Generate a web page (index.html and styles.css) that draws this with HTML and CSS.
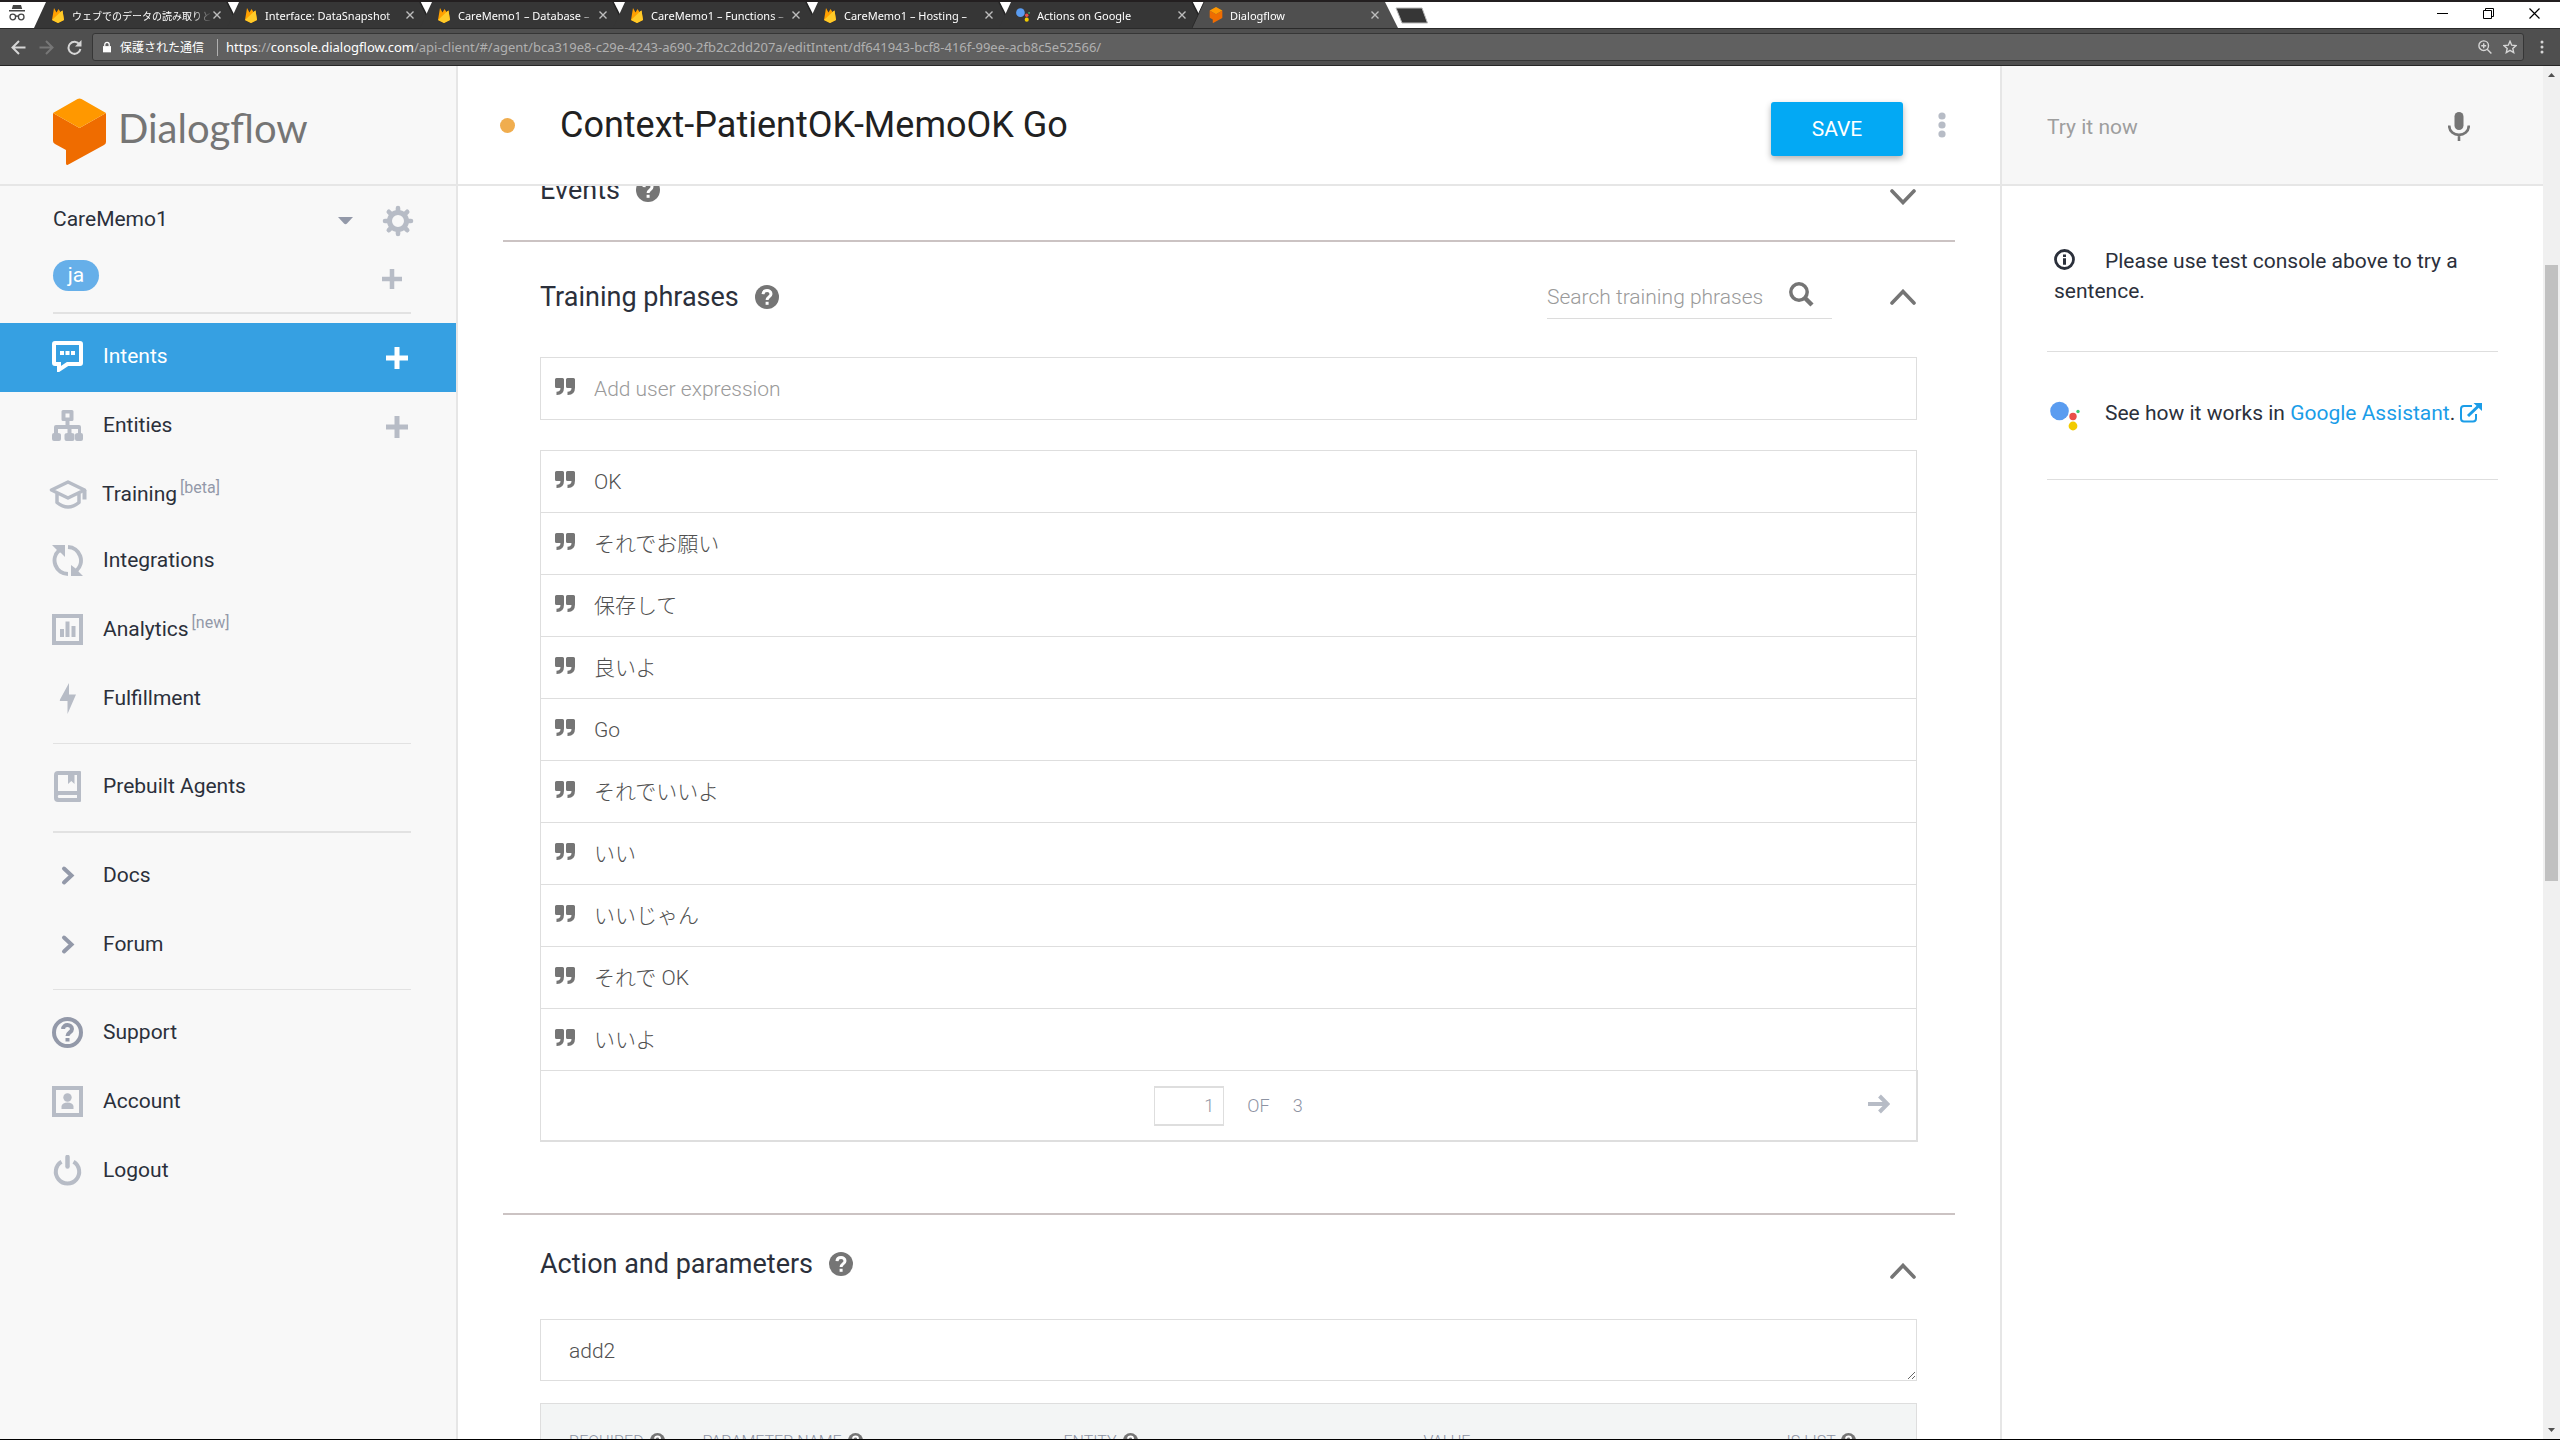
FILE: index.html
```html
<!DOCTYPE html>
<html lang="en">
<head>
<meta charset="utf-8">
<title>Dialogflow</title>
<link rel="stylesheet" href="styles.css">
</head>
<body>
<svg class="defs" aria-hidden="true">
  <symbol id="tab" viewBox="0 0 206 26"><path d="M0 26L12 0H193L206 26z" fill="#363636"/><path d="M193 0L206 26" stroke="#222" stroke-width="1.5"/></symbol>
  <symbol id="tab-active" viewBox="0 0 206 26"><path d="M0 26L12 0H193L206 26z" fill="#4f4f4f"/><path d="M12 0L0 26" stroke="#2a2a2a" stroke-width="1"/></symbol>
  <symbol id="firebase" viewBox="0 0 14 16"><path d="M1 13L3 1l2.500 4.500L7.500 2l2 3 2-1.500L13 13l-6 3z" fill="#ffa000"/><path d="M1 13L9.500 5l2-1.500L13 13l-6 3z" fill="#ffca28"/></symbol>
  <symbol id="assistant" viewBox="0 0 30 30"><circle cx="9.500" cy="10" r="9.300" fill="#5a9cf0"/><circle cx="23" cy="15.500" r="3.700" fill="#ea5048"/><circle cx="23" cy="25" r="4.400" fill="#f2cb00"/><circle cx="28" cy="10.500" r="1.700" fill="#3ecb74"/></symbol>
  <symbol id="cube" viewBox="0 0 53 67"><path d="M0 15L26.500 30 53 15V44q0 2-2 3L14.500 67q-1.500 0-1.500-1.500V52L2 46q-2-1-2-3z" fill="#ef6c00"/><path d="M0 15L24.500 1q2-1.200 4 0L53 15 26.500 30z" fill="#ff9800"/></symbol>
  <symbol id="x" viewBox="0 0 8 8"><path d="M.5 .5l7 7M7.500 .5l-7 7" stroke="#bdbdbd" stroke-width="1.400"/></symbol>
  <symbol id="plus" viewBox="0 0 22 22"><path d="M11 0v22M0 11h22" stroke="currentColor" stroke-width="5"/></symbol>
  <symbol id="help" viewBox="0 0 24 24"><circle cx="12" cy="12" r="12" fill="#757575"/><path d="M8 9.200C8.300 4.300 16 4.600 16 9c0 3-3.900 2.800-3.900 6" fill="none" stroke="#fff" stroke-width="3"/><path d="M10.600 16.800h3v3h-3z" fill="#fff"/></symbol>
  <symbol id="down" viewBox="0 0 26 16"><path d="M2 2l11 11.500L24 2" fill="none" stroke="#757575" stroke-width="3.600" stroke-linecap="round"/></symbol>
  <symbol id="up" viewBox="0 0 26 16"><path d="M2 14L13 2.500 24 14" fill="none" stroke="#757575" stroke-width="3.600" stroke-linecap="round"/></symbol>
  <symbol id="quote" viewBox="0 0 20 17"><path d="M1.500 0h6Q9 0 9 1.500v8Q9 17 2 17H1.500v-3.200Q5.500 13.800 5.500 10h-4Q0 10 0 8.500v-7Q0 0 1.500 0zM12.500 0h6Q20 0 20 1.500v8Q20 17 13 17h-.5v-3.200q4 0 4-3.800h-4Q11 10 11 8.500v-7Q11 0 12.500 0z" fill="#757575"/></symbol>
</svg>

<header class="browser">
  <div class="strip">
    <svg class="incognito" viewBox="0 0 16 16" fill="#454545"><path d="M4 0h8l1.200 4H2.800zM0 5h16v1.500H0z"/><g fill="none" stroke="#454545" stroke-width="1.300"><circle cx="3.800" cy="12" r="2.800"/><circle cx="12.200" cy="12" r="2.800"/><path d="M6.600 11.500q1.400-1 2.800 0"/></g></svg>
    <ul class="tabs">
      <li class="tab"><svg class="shape"><use href="#tab"/></svg><svg class="fav"><use href="#firebase"/></svg><span class="tab-title" lang="ja">ウェブでのデータの読み取りと</span><button class="close" aria-label="Close tab"><svg><use href="#x"/></svg></button></li>
      <li class="tab"><svg class="shape"><use href="#tab"/></svg><svg class="fav"><use href="#firebase"/></svg><span class="tab-title">Interface: DataSnapshot</span><button class="close" aria-label="Close tab"><svg><use href="#x"/></svg></button></li>
      <li class="tab"><svg class="shape"><use href="#tab"/></svg><svg class="fav"><use href="#firebase"/></svg><span class="tab-title">CareMemo1 – Database –</span><button class="close" aria-label="Close tab"><svg><use href="#x"/></svg></button></li>
      <li class="tab"><svg class="shape"><use href="#tab"/></svg><svg class="fav"><use href="#firebase"/></svg><span class="tab-title">CareMemo1 – Functions –</span><button class="close" aria-label="Close tab"><svg><use href="#x"/></svg></button></li>
      <li class="tab"><svg class="shape"><use href="#tab"/></svg><svg class="fav"><use href="#firebase"/></svg><span class="tab-title">CareMemo1 – Hosting –</span><button class="close" aria-label="Close tab"><svg><use href="#x"/></svg></button></li>
      <li class="tab"><svg class="shape"><use href="#tab"/></svg><svg class="fav"><use href="#assistant"/></svg><span class="tab-title">Actions on Google</span><button class="close" aria-label="Close tab"><svg><use href="#x"/></svg></button></li>
      <li class="tab active"><svg class="shape"><use href="#tab-active"/></svg><svg class="fav"><use href="#cube"/></svg><span class="tab-title">Dialogflow</span><button class="close" aria-label="Close tab"><svg><use href="#x"/></svg></button></li>
    </ul>
    <button class="newtab" aria-label="New tab"><svg viewBox="0 0 34 17"><path d="M1 1h26l5.500 15H7z" fill="#363636" stroke="#b8b8b8" stroke-width="1"/></svg></button>
    <div class="window-buttons">
      <button aria-label="Minimize"><svg viewBox="0 0 11 11"><path d="M0 5.500h11" stroke="#000"/></svg></button>
      <button aria-label="Restore"><svg viewBox="0 0 11 11" fill="none" stroke="#000"><path d="M.5 2.500h8v8h-8zM2.500 2.500v-2h8v8h-2"/></svg></button>
      <button aria-label="Close"><svg viewBox="0 0 11 11"><path d="M.5 .5l10 10M10.500 .5l-10 10" stroke="#000" stroke-width="1.200"/></svg></button>
    </div>
  </div>
  <div class="toolbar">
    <div class="nav-buttons">
      <button aria-label="Back"><svg viewBox="0 0 15 15" fill="none" stroke="#d6d6d6" stroke-width="2"><path d="M14.500 7.500H2M8 1L1.500 7.500 8 14"/></svg></button>
      <button aria-label="Forward"><svg viewBox="0 0 15 15" fill="none" stroke="#777" stroke-width="2"><path d="M.5 7.500H13M7 1l6.500 6.500L7 14"/></svg></button>
      <button aria-label="Reload"><svg viewBox="0 0 15 15"><path d="M12.500 4.500A6 6 0 1 0 13.400 9" fill="none" stroke="#d6d6d6" stroke-width="2"/><path d="M14.500 0v6.500H8z" fill="#d6d6d6"/></svg></button>
    </div>
    <div class="omnibox">
      <svg class="lock" viewBox="0 0 9 12"><path d="M0 5h9v7H0z" fill="#fff"/><path d="M2 5.500V3.300a2.500 2.500 0 0 1 5 0v2.200" fill="none" stroke="#fff" stroke-width="1.400"/></svg>
      <span class="secure" lang="ja">保護された通信</span>
      <span class="url"><span class="lit">https</span>://<span class="lit">console.dialogflow.com</span>/api-client/#/agent/bca319e8-c29e-4243-a690-2fb2c2dd207a/editIntent/df641943-bcf8-416f-99ee-acb8c5e52566/</span>
      <svg class="tool" viewBox="0 0 14 14" fill="none" stroke="#d6d6d6" stroke-width="1.400"><circle cx="5.700" cy="5.700" r="4.800"/><path d="M9.200 9.200l4.200 4.200M3.200 5.700h5M5.700 3.200v5"/></svg>
      <svg class="tool" viewBox="0 0 14 14" fill="none" stroke="#d6d6d6" stroke-width="1.400"><path d="M7 1.300l1.700 3.900 4.300.4-3.200 2.800.9 4.200L7 10.400l-3.700 2.200.9-4.200L1 5.600l4.300-.4z"/></svg>
    </div>
    <button class="menu" aria-label="Menu"><svg viewBox="0 0 4 14" fill="#d6d6d6"><circle cx="2" cy="2" r="1.500"/><circle cx="2" cy="7" r="1.500"/><circle cx="2" cy="12" r="1.500"/></svg></button>
  </div>
</header>

<div class="app">
  <aside class="sidebar">
    <a class="brand" href="#"><svg class="brand-icon"><use href="#cube"/></svg><span>Dialogflow</span></a>
    <div class="agent">
      <select class="agent-select" aria-label="Agent"><option>CareMemo1</option></select>
      <svg class="caret" viewBox="0 0 15 8"><path d="M0 0h15L9 6.500q-1.500 1.500-3 0z" fill="#9399a9"/></svg>
      <button class="gear" aria-label="Agent settings"><svg viewBox="0 0 32 32" fill="none" stroke="#b7bcc6"><circle cx="16" cy="16" r="8.500" stroke-width="5"/><path d="M16 3v4M16 25v4M3 16h4M25 16h4M6.800 6.800l2.800 2.800M22.400 22.400l2.800 2.800M6.800 25.200l2.800-2.800M22.400 9.600l2.800-2.800" stroke-width="4.600" stroke-linecap="round"/></svg></button>
    </div>
    <div class="language">
      <span class="pill">ja</span>
      <button class="add-language" aria-label="Add language"><svg viewBox="0 0 22 22"><use href="#plus"/></svg></button>
    </div>
    <hr class="rule thick">
    <nav>
      <div class="item active"><a href="#"><svg class="icon" viewBox="0 0 31 31"><path d="M3 2h25q1 0 1 1v19q0 1-1 1H15.500L7 28.700V23H3q-1 0-1-1V3q0-1 1-1z" fill="none" stroke="#fff" stroke-width="4"/><path d="M8 10h4v4H8zM13.500 10h4v4h-4zM19 10h4v4h-4z" fill="#fff"/></svg>Intents</a><button class="add" aria-label="Create intent"><svg><use href="#plus"/></svg></button></div>
      <div class="item"><a href="#"><svg class="icon" viewBox="0 0 31 31" fill="#b7bcc6"><path fill-rule="evenodd" d="M11 0h9q1.500 0 1.500 1.500v8q0 1.500-1.500 1.500h-2.500v4H27q2 0 2 2v6q2 0 2 2v4q0 2-2 2h-4q-2 0-2-2v-4q0-2 3-2v-4h-6.500v4q3 0 3 2v4q0 2-2 2h-6q-2 0-2-2v-4q0-2 3-2v-4H6v4q3 0 3 2v4q0 2-2 2H2q-2 0-2-2v-4q0-2 2-2v-6q0-2 2-2h9.500v-4H11q-1.500 0-1.500-1.500v-8Q9.500 0 11 0zm2.500 3.500v4h4v-4z"/></svg>Entities</a><button class="add" aria-label="Create entity"><svg><use href="#plus"/></svg></button></div>
      <div class="item short"><a href="#"><svg class="icon wide" viewBox="0 0 40 31" fill="none" stroke="#b7bcc6" stroke-width="3.500" stroke-linejoin="round"><path d="M20 3L3.500 11 20 19l16.500-8zM9 14v9.500q11 9 22 0V14"/><path d="M36.500 11v9.500" stroke-width="4"/></svg>Training <sup>[beta]</sup></a></div>
      <div class="item"><a href="#"><svg class="icon" viewBox="0 0 31 31" fill="none" stroke="#b7bcc6" stroke-width="4"><path d="M16 29A13.500 13.500 0 0 1 7 5.500M16 2a13.500 13.500 0 0 1 8.500 23.500"/><path d="M0 0h13v12l-4-4-3-2zM31 31H19V20l4 3 3 3z" fill="#b7bcc6" stroke="none"/></svg>Integrations</a></div>
      <div class="item"><a href="#"><svg class="icon" viewBox="0 0 31 31" fill="#b7bcc6"><path d="M2 2h27v27H2z" fill="none" stroke="#b7bcc6" stroke-width="4"/><path d="M8 15h4v8H8zM13.500 7.500h4V23h-4zM19.500 12h4v11h-4z"/></svg>Analytics <sup>[new]</sup></a></div>
      <div class="item"><a href="#"><svg class="icon" viewBox="0 0 31 31" fill="#b7bcc6"><path d="M17 0v11.500h7L15.500 31V18H8q-.5 0 0-1.500z"/></svg>Fulfillment</a></div>
      <hr class="rule">
      <div class="item"><a href="#"><svg class="icon" viewBox="0 0 31 31"><path fill="#b7bcc6" fill-rule="evenodd" d="M6 0h22q1 0 1 1v29q0 1-1 1H6q-4 0-4-4V4q0-4 4-4zm0 4v16h19V4h-2.500v9l-3.200-3-3.300 3V4zM6.500 24q-1.500 1.500 0 3H25v-3z"/></svg>Prebuilt Agents</a></div>
      <hr class="rule thick">
      <div class="item"><a href="#"><svg class="icon" viewBox="0 0 31 31" fill="none" stroke="#9399a9" stroke-width="4"><path d="M12 8.500l7.500 7-7.500 7" stroke-linecap="round"/></svg>Docs</a></div>
      <div class="item"><a href="#"><svg class="icon" viewBox="0 0 31 31" fill="none" stroke="#9399a9" stroke-width="4"><path d="M12 8.500l7.500 7-7.500 7" stroke-linecap="round"/></svg>Forum</a></div>
      <hr class="rule">
      <div class="item"><a href="#"><svg class="icon" viewBox="0 0 31 31" fill="none" stroke="#9399a9" stroke-width="4"><circle cx="15.500" cy="15.500" r="13.500"/><path d="M11.200 12C11 6.500 20 7 20 12c0 3.500-4.500 3.300-4.500 7M15.500 21v3.500"/></svg>Support</a></div>
      <div class="item"><a href="#"><svg class="icon" viewBox="0 0 31 31" fill="#b7bcc6"><path d="M2 2h27v27H2z" fill="none" stroke="#b7bcc6" stroke-width="4"/><circle cx="15.500" cy="11.500" r="4.200"/><path d="M9.500 23v-3q1-3.500 6-3.500t6 3.500v3z"/></svg>Account</a></div>
      <div class="item"><a href="#"><svg class="icon" viewBox="0 0 31 31" fill="none" stroke="#b7bcc6" stroke-width="4"><path d="M9.500 6.800a11.700 11.700 0 1 0 12 0"/><path d="M15.500 2v9.500" stroke-width="4.500" stroke-linecap="round"/></svg>Logout</a></div>
    </nav>
  </aside>

  <main class="main">
    <div class="intent-bar">
      <span class="status"></span>
      <input class="intent-name" type="text" value="Context-PatientOK-MemoOK Go" aria-label="Intent name">
      <button class="save">SAVE</button>
      <button class="more" aria-label="More"><svg viewBox="0 0 8 26" fill="#b7bcc6"><circle cx="4" cy="4" r="3.600"/><circle cx="4" cy="13" r="3.600"/><circle cx="4" cy="22" r="3.600"/></svg></button>
    </div>
    <div class="viewport">
      <div class="sections">
        <section class="section events">
          <div class="head"><h2>Events</h2><svg class="help"><use href="#help"/></svg><button class="toggle low" aria-label="Expand"><svg><use href="#down"/></svg></button></div>
        </section>
        <section class="section training">
          <div class="head tall"><h2>Training phrases</h2><svg class="help"><use href="#help"/></svg>
            <div class="search"><input type="search" placeholder="Search training phrases" aria-label="Search training phrases"><svg viewBox="0 0 25 25" fill="none" stroke="#757575"><circle cx="10" cy="10" r="8.200" stroke-width="3.500"/><path d="M16 16l7 7" stroke-width="4.500"/></svg></div>
            <button class="toggle" aria-label="Collapse"><svg><use href="#up"/></svg></button></div>
          <div class="phrase-input"><svg class="quote"><use href="#quote"/></svg><input type="text" placeholder="Add user expression" aria-label="Add user expression"></div>
          <ul class="phrases" lang="ja">
            <li><svg class="quote"><use href="#quote"/></svg><span>OK</span></li>
            <li><svg class="quote"><use href="#quote"/></svg><span>それでお願い</span></li>
            <li><svg class="quote"><use href="#quote"/></svg><span>保存して</span></li>
            <li><svg class="quote"><use href="#quote"/></svg><span>良いよ</span></li>
            <li><svg class="quote"><use href="#quote"/></svg><span>Go</span></li>
            <li><svg class="quote"><use href="#quote"/></svg><span>それでいいよ</span></li>
            <li><svg class="quote"><use href="#quote"/></svg><span>いい</span></li>
            <li><svg class="quote"><use href="#quote"/></svg><span>いいじゃん</span></li>
            <li><svg class="quote"><use href="#quote"/></svg><span>それで OK</span></li>
            <li><svg class="quote"><use href="#quote"/></svg><span>いいよ</span></li>
          </ul>
          <div class="pager">
            <label class="page"><input type="text" value="1" aria-label="Page"><span>OF</span><span>3</span></label>
            <button class="next" aria-label="Next page"><svg viewBox="0 0 22 20" fill="none" stroke="#b7bcc6" stroke-width="4"><path d="M0 10h19" /><path d="M11.500 2l8 8-8 8"/></svg></button>
          </div>
        </section>
        <section class="section action">
          <div class="head"><h2>Action and parameters</h2><svg class="help"><use href="#help"/></svg><button class="toggle low" aria-label="Collapse"><svg><use href="#up"/></svg></button></div>
          <textarea class="action-name" rows="1" aria-label="Action name">add2</textarea>
          <table class="params">
            <thead><tr>
              <th class="c-req">REQUIRED <svg><use href="#help"/></svg></th>
              <th class="c-name">PARAMETER NAME <svg><use href="#help"/></svg></th>
              <th class="c-entity">ENTITY <svg><use href="#help"/></svg></th>
              <th class="c-value">VALUE</th>
              <th class="c-list">IS LIST <svg><use href="#help"/></svg></th>
            </tr></thead>
          </table>
        </section>
      </div>
    </div>
  </main>

  <aside class="console">
    <div class="try">
      <input type="text" placeholder="Try it now" aria-label="Try it now">
      <button class="mic" aria-label="Speak"><svg viewBox="0 0 22 29"><rect x="6.500" width="9" height="18" rx="4.500" fill="#757575"/><path d="M1.200 13.500c0 12.500 19.600 12.500 19.600 0M11 23v6" fill="none" stroke="#757575" stroke-width="2.600"/></svg></button>
    </div>
    <div class="console-body">
      <p class="hint"><svg class="info" viewBox="0 0 21 21"><circle cx="10.500" cy="10.500" r="9" fill="none" stroke="#2b303b" stroke-width="2.800"/><path d="M9 5.500h3v2.600H9zM9 9.300h3v6.500H9z" fill="#2b303b"/></svg>Please use test console above to try a sentence.</p>
      <p class="see"><svg class="ga"><use href="#assistant"/></svg><span>See how it works in <a href="#">Google Assistant</a>.</span><a class="ext" href="#" aria-label="Open"><svg viewBox="0 0 22 20" fill="none" stroke="#1b9de8" stroke-width="2"><path d="M12 3H4Q1 3 1 6v9.500q0 3 3 3h9q3 0 3-3V11"/><path d="M8 13L18 3.500" stroke-width="3"/><path d="M13.500 0H22v8z" fill="#1b9de8" stroke="none"/></svg></a></p>
    </div>
  </aside>

  <div class="scrollbar">
    <svg viewBox="0 0 7 4"><path d="M0 4L3.500 0 7 4z" fill="#505050"/></svg>
    <div class="track"><div class="thumb"></div></div>
    <svg viewBox="0 0 7 4"><path d="M0 0l3.500 4L7 0z" fill="#505050"/></svg>
  </div>
</div>
</body>
</html>
```
FILE: styles.css
```css
* { box-sizing: border-box; }
body {
  margin: 0;
  height: 100vh;
  overflow: hidden;
  display: flex;
  flex-direction: column;
  font-family: Roboto, "Noto Sans CJK JP", sans-serif;
  font-size: 21px;
  color: #2b303b;
  background: #fff;
  border-bottom: 1px solid #000;
}
button { border: 0; padding: 0; background: none; font: inherit; color: inherit; display: flex; }
input, textarea, select { border: 0; padding: 0; margin: 0; background: none; font: inherit; color: inherit; outline: 0; }
ul, p, h2 { margin: 0; padding: 0; list-style: none; }
a { color: inherit; text-decoration: none; }
svg { display: block; flex: none; }
.defs { position: absolute; width: 0; height: 0; }

/* Browser window */
.browser { flex: none; border-top: 2px solid #231f20; font: 12px "Noto Sans", "Noto Sans CJK JP", sans-serif; color: #fff; }
.strip { display: flex; height: 27px; background: #fff; border-bottom: 1px solid #2a2a2a; }
.incognito { width: 16px; height: 16px; margin: 3px 9px 0; }
.tabs { display: flex; isolation: isolate; }
.tab { position: relative; width: 193px; height: 26px; padding: 0 0 0 17px; display: flex; align-items: center; z-index: 1; }
.tab.active { z-index: 2; height: 27px; padding-bottom: 1px; }
.shape { position: absolute; left: 0; top: 0; width: 206px; height: 26px; z-index: -1; }
.tab:nth-child(-n+6) { z-index: 0; }
.fav { width: 14px; height: 16px; }
.tab-title { margin-left: 7px; width: 140px; font-size: 11px; white-space: nowrap; mask-image: linear-gradient(90deg, #000 86%, transparent); }
.tab-title:lang(ja) { font-size: 10px; }
.close { margin-left: 1px; }
.close svg { width: 8px; height: 8px; }
.newtab { margin: 5px 0 0 10px; height: 17px; }
.newtab svg { width: 34px; height: 17px; }
.window-buttons { margin-left: auto; padding: 6px 20px 0 0; display: flex; gap: 35px; }
.window-buttons svg { width: 11px; height: 11px; }
.toolbar { height: 37px; display: flex; align-items: center; background: #4f4f4f; border-bottom: 1px solid #262626; }
.nav-buttons { display: flex; gap: 13px; margin-left: 11px; width: 81px; }
.nav-buttons svg { width: 15px; height: 15px; }
.omnibox { flex: 1; height: 28px; display: flex; align-items: center; gap: 9px; padding: 0 6px 0 10px; background: #606060; border: 1px solid #363636; border-radius: 3px; }
.lock { width: 8px; height: 12px; }
.url { flex: 1; margin-left: 4px; padding-left: 8px; border-left: 1px solid #b0b0b0; color: #b0b0b0; font-size: 13px; line-height: 17px; white-space: nowrap; }
.lit { color: #fff; }
.tool { width: 14px; height: 14px; }
.omnibox .tool + .tool { margin-left: 2px; }
.menu { padding: 0 16px; }
.menu svg { width: 4px; height: 14px; }

/* Console layout */
.app { flex: 1; min-height: 0; display: grid; grid-template-columns: 458px 1fr 543px 17px; }

.sidebar { background: #f8f8f8; border-right: 2px solid #e6e6e6; overflow: hidden; }
.brand { height: 120px; padding: 0 0 0 53px; display: flex; align-items: center; gap: 12px; border-bottom: 2px solid #e6e6e6; font-family: Lato, sans-serif; font-size: 40px; line-height: 62px; color: #757575; }
.brand span { padding-top: 6px; }
.brand-icon { width: 53px; height: 67px; margin-top: 12px; }
.agent { height: 70px; padding: 0 42px 0 53px; display: flex; align-items: center; }
.agent-select { appearance: none; flex: 1; padding-bottom: 4px; }
.caret { width: 15px; height: 8px; }
.gear { margin-left: 29px; }
.gear svg { width: 32px; height: 32px; }
.language { height: 39px; padding: 0 54px 0 53px; display: flex; align-items: center; justify-content: space-between; }
.pill { width: 46px; height: 31px; line-height: 31px; border-radius: 16px; background: #66afe9; color: #fff; text-align: center; }
.add-language { padding-top: 6px; color: #b7bcc6; }
.add-language svg { width: 20px; height: 20px; }
.rule { border: 0; height: 1px; margin: 9px 45px 9px 53px; background: #e2e2e2; }
.rule.thick { height: 2px; }
.language + .rule { margin-top: 17px; }
.item { height: 69px; padding: 0 48px 3px 52px; display: flex; align-items: center; }
.item.short { height: 66px; padding-bottom: 0; }
.item a { flex: 1; display: flex; align-items: center; line-height: 24px; }
.item.active { background: #36a0e2; color: #fff; }
.icon { width: 31px; height: 31px; margin-right: 20px; }
.icon.wide { width: 40px; margin: 0 14px 0 -4px; }
.item sup { margin: 0 0 12px 3px; font-size: 16px; line-height: 20px; color: #9399a9; }
.add { padding-top: 4px; color: #b7bcc6; }
.active .add { color: #fff; }
.add svg { width: 22px; height: 22px; }

.main { display: flex; flex-direction: column; min-width: 0; min-height: 0; }
.intent-bar { flex: none; height: 120px; padding: 0 54px 0 42px; display: flex; align-items: center; border-bottom: 2px solid #e6e6e6; }
.status { width: 15px; height: 15px; border-radius: 50%; background: #f0ad4e; }
.intent-name { flex: 1; margin-left: 45px; font-size: 36px; color: #212121; }
.save { width: 132px; height: 54px; margin: 8px 35px 0 0; align-items: center; justify-content: center; border-radius: 3px; background: #03a9f4; color: #fff; box-shadow: 0 3px 6px rgba(0, 0, 0, .3); }
.more svg { width: 8px; height: 26px; }

.viewport { flex: 1; min-height: 0; overflow: hidden; }
.sections { margin: -45px 45px 0; }
.section { padding: 0 38px 0 37px; border-bottom: 2px solid #cbc3c3; }
.section.events { padding-bottom: 2px; }
.section.training { padding-bottom: 71px; }
.section.action { border: 0; }
.head { height: 97px; margin-bottom: 7px; display: flex; align-items: center; }
.events .head { margin: 0; }
.head.tall { height: 110px; margin-bottom: 5px; }
h2 { font-size: 27px; font-weight: 400; line-height: 32px; }
.help { width: 24px; height: 24px; margin-left: 16px; }
.toggle { margin: 0 1px 0 auto; }
.toggle.low { padding-top: 14px; }
.toggle svg { width: 26px; height: 16px; }
.search { width: 285px; height: 44px; margin-left: auto; display: flex; align-items: center; border-bottom: 1px solid #dcdcdc; }
.search input { width: 242px; font-weight: 300; }
.search svg { width: 25px; height: 25px; margin-bottom: 4px; }
.search + .toggle { margin-left: 58px; }
::placeholder { color: #9a9a9a; opacity: 1; }
.quote { width: 20px; height: 17px; margin-bottom: 4px; }
.phrase-input { height: 63px; padding: 0 14px; display: flex; align-items: center; gap: 19px; border: 1px solid #dedede; font-weight: 300; }
.phrase-input input { flex: 1; }
.phrases { margin-top: 30px; border: 1px solid #dedede; border-width: 0 1px; }
.phrases li { height: 62px; padding: 0 14px; display: flex; align-items: center; gap: 19px; border-top: 1px solid #dedede; font-weight: 300; line-height: 30px; color: #505050; }
.pager { height: 72px; margin-right: -1px; padding: 0 26px 0 48px; display: flex; align-items: center; border: 1px solid #dedede; border-width: 1px 2px 2px 1px; font-size: 18px; font-weight: 300; color: #8d93a3; }
.page { flex: 1; display: flex; align-items: center; justify-content: center; gap: 23px; }
.page input { width: 70px; height: 40px; padding-right: 9px; border: 2px solid #dedede; border-width: 2px 1px; text-align: right; }
.next svg { width: 22px; height: 20px; margin-bottom: 4px; }
.action-name { display: block; width: 100%; height: 62px; padding: 19px 28px 0; border: 1px solid #dedede; font-weight: 300; line-height: 25px; color: #505050; resize: both; overflow: hidden; }
.params { width: 100%; height: 84px; margin-top: 22px; border-collapse: collapse; table-layout: fixed; border: 1px solid #dedede; background: #f3f5f5; font-size: 16px; color: #8d93a3; }
.params th { padding: 28px 0 0; font-weight: 300; text-align: left; vertical-align: top; line-height: 20px; }
.params svg { display: inline-block; width: 15px; height: 15px; margin-left: 2px; vertical-align: -1px; }
.params .c-req { width: 162px; padding-left: 28px; }
.params .c-name { width: 361px; }
.params .c-entity { width: 360px; }
.params .c-value { width: 363px; }

.console { border-left: 2px solid #e6e6e6; }
.try { height: 120px; padding: 3px 73px 0 45px; display: flex; align-items: center; background: #f7f7f7; border-bottom: 2px solid #e6e6e6; }
.try input { flex: 1; }
.try ::placeholder { color: #9e9e9e; }
.mic svg { width: 22px; height: 29px; }
.console-body { padding: 0 45px; line-height: 30px; }
.hint { height: 166px; padding: 60px 30px 0 7px; border-bottom: 1px solid #dedede; }
.info { display: inline-block; width: 21px; height: 21px; margin-right: 30px; vertical-align: -2px; }
.see { height: 128px; padding-left: 3px; display: flex; align-items: center; border-bottom: 1px solid #dedede; }
.ga { width: 30px; height: 30px; margin-right: 25px; }
.see span, .ext { padding-bottom: 5px; }
.see a { color: #1b9de8; }
.ext svg { width: 22px; height: 20px; margin-left: 5px; }

.scrollbar { padding: 7px 0; display: flex; flex-direction: column; align-items: center; background: #f0f0f0; }
.scrollbar svg { width: 7px; height: 4px; }
.track { flex: 1; width: 13px; padding-top: 188px; }
.thumb { height: 53%; background: #c1c1c1; }
```
